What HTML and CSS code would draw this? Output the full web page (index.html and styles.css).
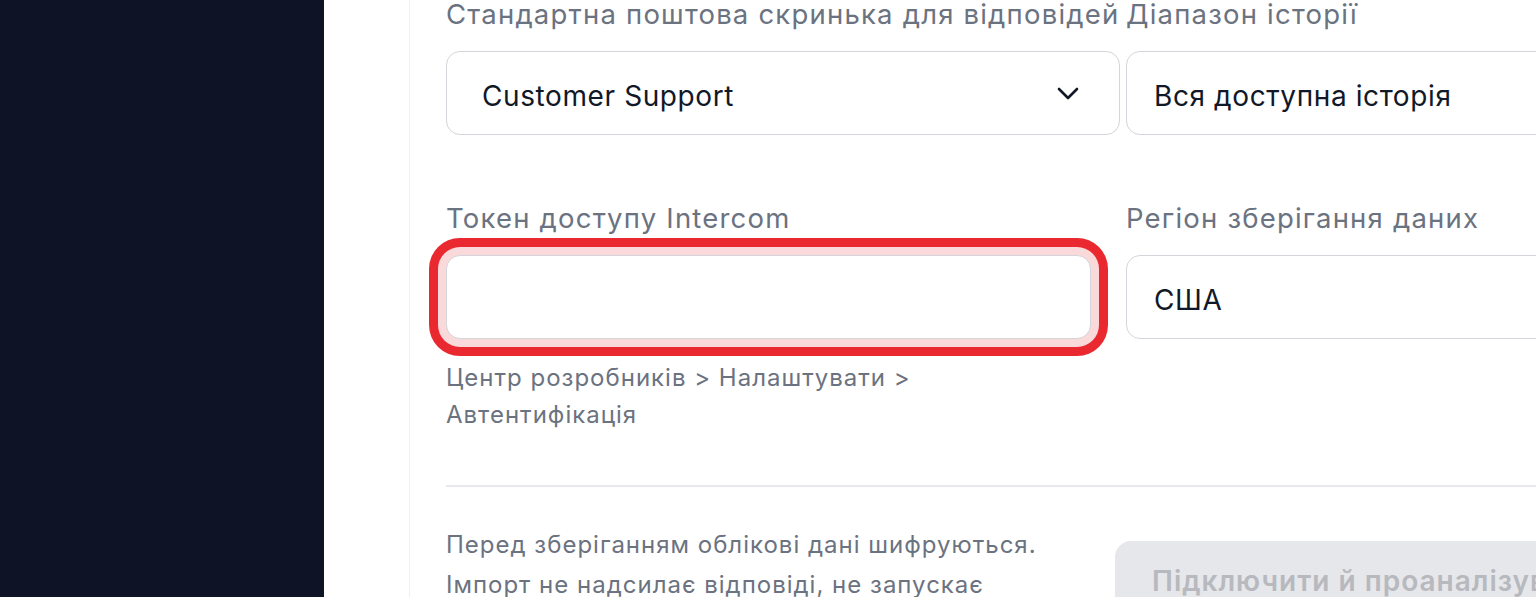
FILE: index.html
```html
<!DOCTYPE html>
<html>
<head>
	<meta charset="utf-8">
	<meta name="viewport" content="width=device-width, initial-scale=1">
	<title>Імпорт з Intercom</title>
	<link rel="stylesheet" href="styles.css">
</head>
<body>

	<div class="app">
		<aside class="sidebar"></aside>

		<main class="main">
			<section class="card">
				<div class="row row_top">
					<div class="field field_inbox">
						<label class="label">Стандартна поштова скринька для відповідей</label>
						<div class="select">
							<span>Customer Support</span>
							<svg class="chevron" width="22" height="13" viewBox="0 0 22 13">
								<path d="M2 2l9 9 9-9" fill="none" stroke="#111827" stroke-width="2.6" stroke-linecap="round" stroke-linejoin="round"/>
							</svg>
						</div>
					</div>
					<div class="field field_wide">
						<label class="label">Діапазон історії</label>
						<div class="select">
							<span>Вся доступна історія</span>
						</div>
					</div>
				</div>

				<div class="row row_token">
					<div class="field field_token">
						<label class="label">Токен доступу Intercom</label>
						<input type="password" class="input input_error">
						<p class="hint">Центр розробників &gt; Налаштувати &gt; Автентифікація</p>
					</div>
					<div class="field field_wide">
						<label class="label">Регіон зберігання даних</label>
						<div class="select">
							<span>США</span>
						</div>
					</div>
				</div>

				<hr class="divider">

				<div class="footer">
					<p class="note">Перед зберіганням облікові дані шифруються. Імпорт не надсилає відповіді, не запускає автоматизації та не змінює розмови.</p>
					<button class="submit" disabled>Підключити й проаналізувати</button>
				</div>
			</section>
		</main>
	</div>

</body>
</html>
```

FILE: styles.css
```css
* {
	box-sizing: border-box;
}
html, body {
	margin: 0;
	height: 100%;
	overflow: hidden;
}
body {
	font-family: Inter, "Noto Sans", sans-serif;
	background: #fff;
	color: #111827;
}
.app {
	display: flex;
	height: 100%;
}
.sidebar {
	width: 324px;
	flex-shrink: 0;
	background: #0e1426;
}
.main {
	flex: 1;
	padding-left: 85px;
	overflow: hidden;
}
.card {
	width: 1500px;
	min-height: 100%;
	border-left: 1px solid #eef0f3;
	padding-left: 36px;
}
.row {
	display: flex;
	align-items: flex-start;
}
.row_top {
	gap: 6px;
}
.row_token {
	gap: 35px;
	margin-top: 69px;
}
.field {
	display: flex;
	flex-direction: column;
}
.field_inbox {
	width: 674px;
}
.field_token {
	width: 645px;
}
.field_wide {
	width: 700px;
}
.label {
	font-size: 27.5px;
	line-height: 29px;
	letter-spacing: 1.2px;
	color: #6b7280;
	white-space: nowrap;
	margin-bottom: 22px;
}
.select, .input {
	height: 84px;
	border: 1.5px solid #d4d5da;
	border-radius: 14px;
	background: #fff;
	font-family: inherit;
	font-size: 28px;
	color: #111827;
}
.select {
	display: flex;
	align-items: center;
	justify-content: space-between;
	padding: 6px 40px 0 35px;
	letter-spacing: 0.6px;
}
.field_wide .select {
	padding-left: 27px;
}
.chevron {
	display: block;
	margin-top: -6px;
}
.input {
	width: 100%;
	padding: 0 28px;
	outline: none;
}
.input_error {
	box-shadow: 0 0 0 8px #fad9da, 0 0 0 17px #e9282f;
}
.hint {
	margin: 20px 0 0;
	width: 500px;
	font-size: 24px;
	line-height: 37px;
	letter-spacing: 1px;
	color: #6b7280;
}
.divider {
	margin: 52px 0 0;
	border: none;
	border-top: 2px solid #e8e9ec;
}
.footer {
	display: flex;
	align-items: flex-start;
	gap: 29px;
	margin-top: 38px;
}
.note {
	margin: 0;
	width: 640px;
	font-size: 24px;
	line-height: 40px;
	letter-spacing: 1px;
	color: #6b7280;
}
.submit {
	margin-top: 16px;
	background: #e6e7ea;
	color: #b7b9bf;
	border: none;
	border-radius: 16px;
	padding: 20px 37px;
	font-family: inherit;
	font-size: 28px;
	line-height: 40px;
	font-weight: 600;
	letter-spacing: 1px;
	white-space: nowrap;
}
```
